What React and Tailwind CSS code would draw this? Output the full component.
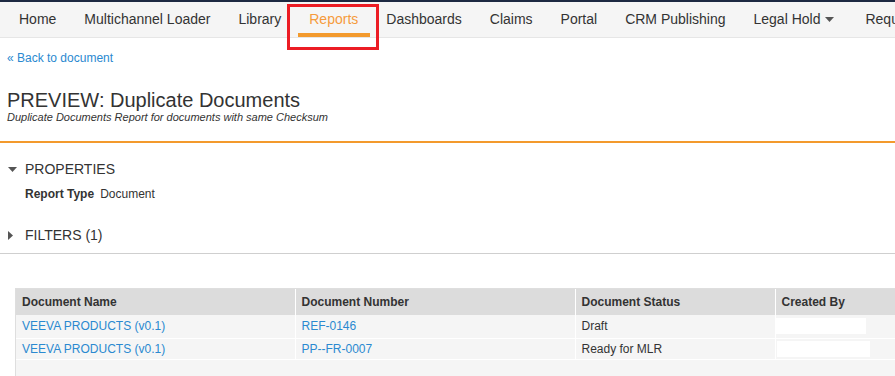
import React from "react";

const navItems = [
  "Home",
  "Multichannel Loader",
  "Library",
  "Reports",
  "Dashboards",
  "Claims",
  "Portal",
  "CRM Publishing",
  "Legal Hold",
  "Requests",
];

const rows = [
  { name: "VEEVA PRODUCTS (v0.1)", number: "REF-0146", status: "Draft", h: "h-[23px]", redact: "w-[91px] ml-[-1px]" },
  { name: "VEEVA PRODUCTS (v0.1)", number: "PP--FR-0007", status: "Ready for MLR", h: "h-[21px]", redact: "w-[93px] ml-[1px]" },
];

const Caret = ({ dir = "down" }) =>
  dir === "down" ? (
    <svg width="9" height="5" viewBox="0 0 9 5" className="fill-[#555]">
      <path d="M0 0h9L4.5 5z" />
    </svg>
  ) : (
    <svg width="5" height="9" viewBox="0 0 5 9" className="fill-[#555]">
      <path d="M0 0v9l5-4.5z" />
    </svg>
  );

const TopNav = () => (
  <div className="relative border-t-2 border-[#1d2942] bg-[#f5f5f5] border-b border-b-[#e6e6e6]">
    <div className="flex h-[35px] items-center pl-[5px] whitespace-nowrap">
      {navItems.map((item) => (
        <div
          key={item}
          className={`relative flex h-full items-center px-[14px] text-[14px] ${
            item === "Reports" ? "text-[#f59b3c]" : "text-[#333]"
          }`}
        >
          {item}
          {item === "Legal Hold" && (
            <span className="ml-[5px] mr-[3px] flex items-center">
              <Caret />
            </span>
          )}
          {item === "Reports" && (
            <span className="absolute left-[3px] right-[2px] bottom-0 h-[4px] bg-[#f39a2d]" />
          )}
        </div>
      ))}
    </div>
    {/* annotation box around the active tab */}
    <div className="absolute left-[287px] top-[2px] h-[46px] w-[92px] border-[3px] border-[#ec1c24]" />
  </div>
);

const Section = ({ title, open, children }) => (
  <div className="pl-[8px]">
    <div className="flex items-center h-[20px]">
      <span className="w-[17px] flex items-center">
        <Caret dir={open ? "down" : "right"} />
      </span>
      <span className="text-[14px] text-[#333] uppercase">{title}</span>
    </div>
    {children}
  </div>
);

export default function App() {
  return (
    <div
      className="h-[376px] w-[895px] overflow-hidden bg-white text-[#333]"
      style={{ fontFamily: '"Liberation Sans", Arial, sans-serif' }}
    >
      <TopNav />

      <div className="px-[7px] pt-[7px]">
        <a className="text-[12px] text-[#2a89d0]">« Back to document</a>
      </div>

      <div className="px-[7px] pt-[20px]">
        <h1 className="text-[20px] leading-[22px] text-[#333]">PREVIEW: Duplicate Documents</h1>
        <p className="text-[11px] italic leading-[13px] text-[#333]">
          Duplicate Documents Report for documents with same Checksum
        </p>
      </div>

      <div className="mt-[17px] h-[2px] bg-[#f39a2d]" />

      <div className="pt-[16px]">
        <Section title="Properties" open>
          <div className="pl-[17px] pt-[6px] text-[12px] text-[#333]">
            <span className="font-bold">Report Type</span>
            <span className="ml-[6px]">Document</span>
          </div>
        </Section>
        <div className="pt-[22px]">
          <Section title="Filters (1)" />
        </div>
      </div>

      <div className="mt-[8px] h-px bg-[#cfcfcf]" />

      <div className="ml-[15px] mt-[34px] w-[1000px] border-l border-t border-[#dedede] bg-[#f5f5f5] pb-[20px]">
        <table className="w-full table-fixed border-collapse text-[12px]">
          <colgroup>
            <col className="w-[279px]" />
            <col className="w-[280px]" />
            <col className="w-[200px]" />
            <col />
          </colgroup>
          <thead>
            <tr className="h-[26px] bg-[#dcdcdc] text-left">
              {["Document Name", "Document Number", "Document Status", "Created By"].map((h) => (
                <th key={h} className="border-r border-white px-[6px] font-bold text-[#333]">
                  {h}
                </th>
              ))}
            </tr>
          </thead>
          <tbody>
            {rows.map((r, i) => (
              <tr key={i} className={`border-b border-white ${r.h}`}>
                <td className="border-r border-white px-[6px] text-[#2a89d0]">{r.name}</td>
                <td className="border-r border-white px-[6px] text-[#2a89d0]">{r.number}</td>
                <td className="border-r border-white px-[6px] text-[#333]">{r.status}</td>
                <td className="px-0">
                  <div className={`h-[16px] bg-white ${r.redact}`} />
                </td>
              </tr>
            ))}
          </tbody>
        </table>
      </div>
    </div>
  );
}
